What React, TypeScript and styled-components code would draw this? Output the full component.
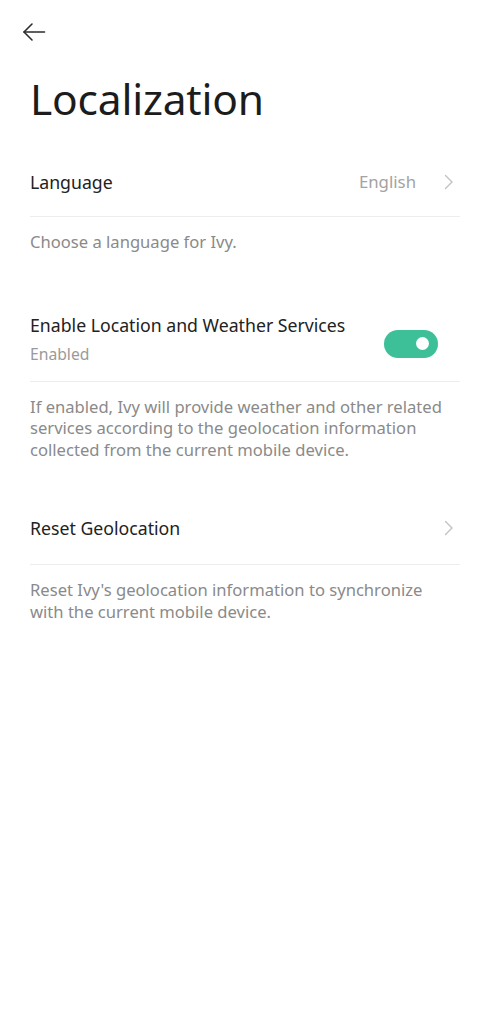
import React from "react";
import styled, { createGlobalStyle } from "styled-components";

const Global = createGlobalStyle`
  html, body { margin: 0; padding: 0; background: #ffffff; }
  body { font-family: "Noto Sans", "Open Sans", sans-serif; -webkit-font-smoothing: antialiased; }
  * { box-sizing: border-box; }
`;

const Screen = styled.div`
  width: 490px;
  min-height: 1024px;
  background: #ffffff;
  display: flex;
  flex-direction: column;
`;

const TopBar = styled.div`
  height: 64px;
  padding: 22px 0 0 22px;
  display: flex;
  align-items: flex-start;
`;

const BackButton = styled.button`
  border: none;
  background: none;
  padding: 0;
  width: 24px;
  height: 20px;
  display: flex;
  align-items: center;
  justify-content: center;
  cursor: pointer;
`;

const Title = styled.h1`
  margin: 5px 0 0;
  padding: 0 30px;
  font-size: 42.5px;
  line-height: 60px;
  font-weight: 400;
  color: #1c1c1c;
  letter-spacing: -0.2px;
`;

const Content = styled.div`
  padding: 0 30px;
  display: flex;
  flex-direction: column;
`;

const Section = styled.section<{ $top: number }>`
  margin-top: ${(p) => p.$top}px;
  display: flex;
  flex-direction: column;
`;

const Row = styled.div<{ $height?: number }>`
  min-height: ${(p) => p.$height ?? 70}px;
  display: flex;
  align-items: center;
  justify-content: space-between;
  border-bottom: 1px solid #ededed;
`;

const TwoLineRow = styled(Row)`
  padding: 14px 0 16px;
  align-items: center;
`;

const LabelBlock = styled.div`
  display: flex;
  flex-direction: column;
`;

const Label = styled.span`
  font-size: 17.7px;
  line-height: 24px;
  color: #222222;
`;

const SubLabel = styled.span`
  font-size: 15.7px;
  line-height: 22px;
  margin-top: 6px;
  color: #9a9a9a;
`;

const Trailing = styled.div`
  display: flex;
  align-items: center;
  gap: 28px;
  padding-right: 6px;
`;

const Value = styled.span`
  font-size: 16.8px;
  color: #a3a3a3;
`;

const Description = styled.p`
  margin: 0;
  padding-top: 14px;
  font-size: 16.6px;
  line-height: 21.5px;
  color: #8a8a8a;
`;

const Toggle = styled.div<{ $on: boolean }>`
  width: 54px;
  height: 28px;
  border-radius: 14px;
  background: ${(p) => (p.$on ? "#3dbf98" : "#cfcfcf")};
  display: flex;
  align-items: center;
  justify-content: ${(p) => (p.$on ? "flex-end" : "flex-start")};
  padding: 0 9px;
  margin: 10px 22px 0 0;
`;

const Thumb = styled.span`
  width: 13px;
  height: 13px;
  border-radius: 50%;
  background: #ffffff;
`;

const BackIcon = () => (
  <svg width="24" height="20" viewBox="0 0 24 20" fill="none">
    <path d="M22.5 10H2" stroke="#2b2b2b" strokeWidth="1.6" strokeLinecap="round" />
    <path d="M10 2L2 10L10 18" stroke="#2b2b2b" strokeWidth="1.6" strokeLinecap="round" strokeLinejoin="round" />
  </svg>
);

const Chevron = () => (
  <svg width="10" height="16" viewBox="0 0 10 16" fill="none">
    <path d="M1.5 1.5L8 8L1.5 14.5" stroke="#c2c2c2" strokeWidth="1.4" strokeLinecap="round" strokeLinejoin="round" />
  </svg>
);

export default function App() {
  return (
    <Screen>
      <Global />
      <TopBar>
        <BackButton aria-label="Back">
          <BackIcon />
        </BackButton>
      </TopBar>
      <Title>Localization</Title>
      <Content>
        <Section $top={18}>
          <Row>
            <Label>Language</Label>
            <Trailing>
              <Value>English</Value>
              <Chevron />
            </Trailing>
          </Row>
          <Description>Choose a language for Ivy.</Description>
        </Section>
        <Section $top={46}>
          <TwoLineRow>
            <LabelBlock>
              <Label>Enable Location and Weather Services</Label>
              <SubLabel>Enabled</SubLabel>
            </LabelBlock>
            <Toggle $on={true}>
              <Thumb />
            </Toggle>
          </TwoLineRow>
          <Description>
            If enabled, Ivy will provide weather and other related services according to the
            geolocation information collected from the current mobile device.
          </Description>
        </Section>
        <Section $top={31}>
          <Row $height={74}>
            <Label>Reset Geolocation</Label>
            <Trailing>
              <Chevron />
            </Trailing>
          </Row>
          <Description>
            Reset Ivy's geolocation information to synchronize with the current mobile device.
          </Description>
        </Section>
      </Content>
    </Screen>
  );
}
